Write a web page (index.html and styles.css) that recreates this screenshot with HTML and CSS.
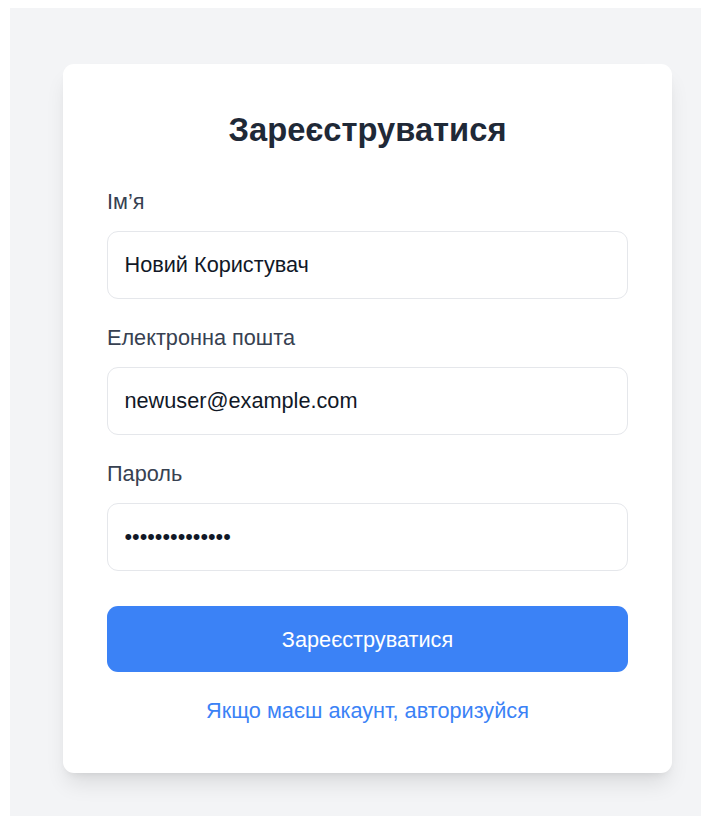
FILE: index.html
```html
<!DOCTYPE html>
<html lang="uk">
<head>
<meta charset="utf-8">
<title>Реєстрація</title>
<link rel="stylesheet" href="styles.css">
</head>
<body>
<main class="page">
  <form class="card" onsubmit="return false">
    <h1 class="title">Зареєструватися</h1>
    <div class="field">
      <label class="label" for="name">Ім’я</label>
      <input class="input" id="name" type="text" value="Новий Користувач">
    </div>
    <div class="field">
      <label class="label" for="email">Електронна пошта</label>
      <input class="input" id="email" type="email" value="newuser@example.com">
    </div>
    <div class="field field-last">
      <label class="label" for="password">Пароль</label>
      <input class="input" id="password" type="password" value="newuserpass123">
    </div>
    <button class="button" type="submit">Зареєструватися</button>
    <p class="switch"><a class="switch-link" href="#">Якщо маєш акаунт, авторизуйся</a></p>
  </form>
</main>
</body>
</html>
```

FILE: styles.css
```css
* {
  box-sizing: border-box;
}

html, body {
  margin: 0;
  background: #ffffff;
}

body {
  padding: 8px 0 0 10px;
  font-family: "Liberation Sans", Arial, sans-serif;
}

.page {
  height: 808px;
  background: #f3f4f6;
  padding: 56px 29px 0 53px;
}

.card {
  width: 609px;
  background: #ffffff;
  border-radius: 11px;
  padding: 44px 44px 46px;
  box-shadow: 0 14px 21px -4px rgba(0, 0, 0, 0.1), 0 5px 8px -5px rgba(0, 0, 0, 0.1);
}

.title {
  margin: 0 0 33px;
  font-size: 32.7px;
  line-height: 44px;
  font-weight: 700;
  color: #1f2937;
  text-align: center;
}

.field {
  margin-bottom: 22px;
}

.field-last {
  margin-bottom: 35px;
}

.label {
  display: block;
  margin-bottom: 13px;
  font-size: 21.7px;
  line-height: 33px;
  color: #374151;
}

.input {
  display: block;
  width: 100%;
  height: 68px;
  padding: 0 16.5px;
  border: 1px solid #e5e7eb;
  border-radius: 11px;
  background: #ffffff;
  font-family: "Liberation Sans", Arial, sans-serif;
  font-size: 21.7px;
  line-height: 33px;
  color: #111827;
  outline: none;
}

.button {
  display: block;
  width: 100%;
  height: 66px;
  border: 0;
  border-radius: 11px;
  background: #3b82f6;
  color: #ffffff;
  font-family: "Liberation Sans", Arial, sans-serif;
  font-size: 21.7px;
  line-height: 33px;
  cursor: pointer;
}

.switch {
  margin: 22px 0 0;
  text-align: center;
  font-size: 21.7px;
  line-height: 33px;
}

.switch-link {
  color: #3b82f6;
  text-decoration: none;
}
```
